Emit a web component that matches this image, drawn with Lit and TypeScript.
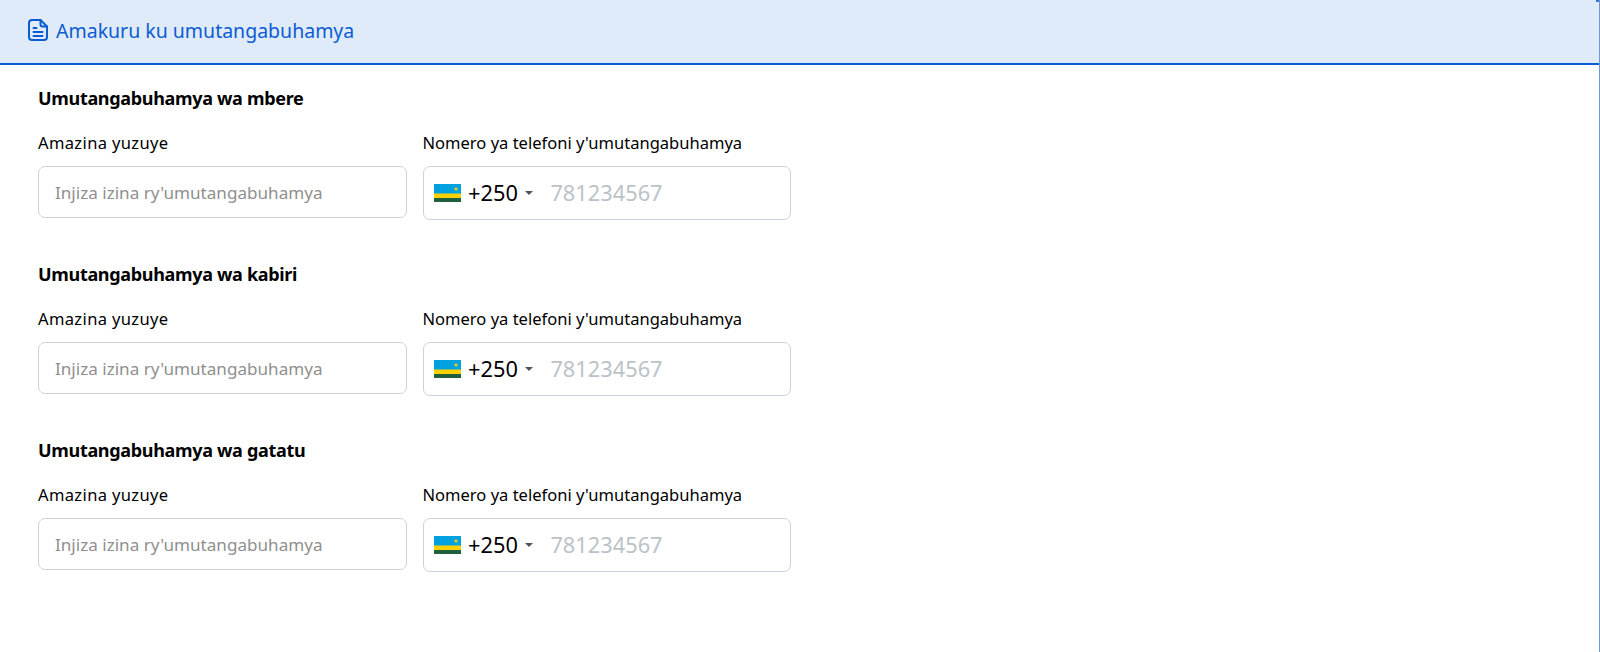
import { LitElement, html, css, svg } from "lit";
import { customElement } from "lit/decorators.js";

const sections = ["Umutangabuhamya wa mbere", "Umutangabuhamya wa kabiri", "Umutangabuhamya wa gatatu"];

@customElement("app-root")
export class AppRoot extends LitElement {
  static styles = css`
    :host { display: block; position: relative; font-family: "Noto Sans", "Lato", sans-serif; background: #fff; height: 652px; box-sizing: border-box; border-right: 1.5px solid #6f97d6; color: #000; overflow: hidden; }
    .corner { position: absolute; top: 0; right: 0; width: 3px; height: 2px; background: #2f74dc; }
    .head { height: 65px; box-sizing: border-box; background: #dfebf9; border-bottom: 2.5px solid #0b5bd3; display: flex; align-items: center; gap: 7px; padding: 0 0 0 27px; color: #0b5bd3; font-size: 19.5px; }
    .head svg { width: 22px; height: 24px; display: block; margin-bottom: 3px; }
    .head span { margin-bottom: 2px; }
    .body { padding: 23px 0 0 38px; display: flex; flex-direction: column; gap: 44px; }
    .sec { width: 754px; }
    h3 { margin: 0; font-size: 18px; font-weight: 700; line-height: 20px; letter-spacing: -0.32px; }
    .row { display: grid; grid-template-columns: 369px 368.5px; column-gap: 15.5px; margin-top: 25px; align-items: start; }
    label { display: block; font-size: 16.55px; line-height: 20px; margin-bottom: 13px; }
    label.short { letter-spacing: 0.36px; }
    .box { box-sizing: border-box; border: 1.5px solid #cbd3e0; border-radius: 7px; display: flex; align-items: center; background: #fff; }
    .name { height: 52px; margin-top: 2px; color: #8f8f8f; font-size: 17.1px; padding-left: 16px; }
    .phone { height: 54px; padding-left: 10.5px; }
    .flag { width: 27px; height: 18px; display: block; }
    .code { font-size: 21.8px; margin-left: 7px; margin-bottom: 2px; }
    .caret { width: 0; height: 0; border-left: 4px solid transparent; border-right: 4px solid transparent; border-top: 4px solid #555; margin-left: 7.5px; }
    .num { color: #bcc2c9; font-size: 21.8px; margin-left: 17px; margin-bottom: 2px; }
  `;

  flag() {
    return html`<svg class="flag" viewBox="0 0 27 18">
      <rect width="27" height="18" fill="#20603d"/>
      <rect width="27" height="14" fill="#fad201"/>
      <rect width="27" height="9.5" fill="#00a1de"/>
      <circle cx="22" cy="5" r="1.8" fill="#c9c83a"/>
    </svg>`;
  }

  render() {
    return html`
      <div class="corner"></div>
      <div class="head">
        <svg viewBox="0 0 22 24" fill="none" stroke="currentColor" stroke-width="2" stroke-linejoin="round" stroke-linecap="round">
          ${svg`<path d="M13.5 2H5a3 3 0 0 0-3 3v14a3 3 0 0 0 3 3h12a3 3 0 0 0 3-3V8.5z"/><path d="M13.5 2v4.5a2 2 0 0 0 2 2H20" /><path d="M6.5 10h3M6.5 14h9M6.5 18h9"/>`}
        </svg>
        <span>Amakuru ku umutangabuhamya</span>
      </div>
      <div class="body">
        ${sections.map((s) => html`
          <div class="sec">
            <h3>${s}</h3>
            <div class="row">
              <div>
                <label class="short">Amazina yuzuye</label>
                <div class="box name">Injiza izina ry'umutangabuhamya</div>
              </div>
              <div>
                <label>Nomero ya telefoni y'umutangabuhamya</label>
                <div class="box phone">${this.flag()}<span class="code">+250</span><span class="caret"></span><span class="num">781234567</span></div>
              </div>
            </div>
          </div>`)}
      </div>
    `;
  }
}
